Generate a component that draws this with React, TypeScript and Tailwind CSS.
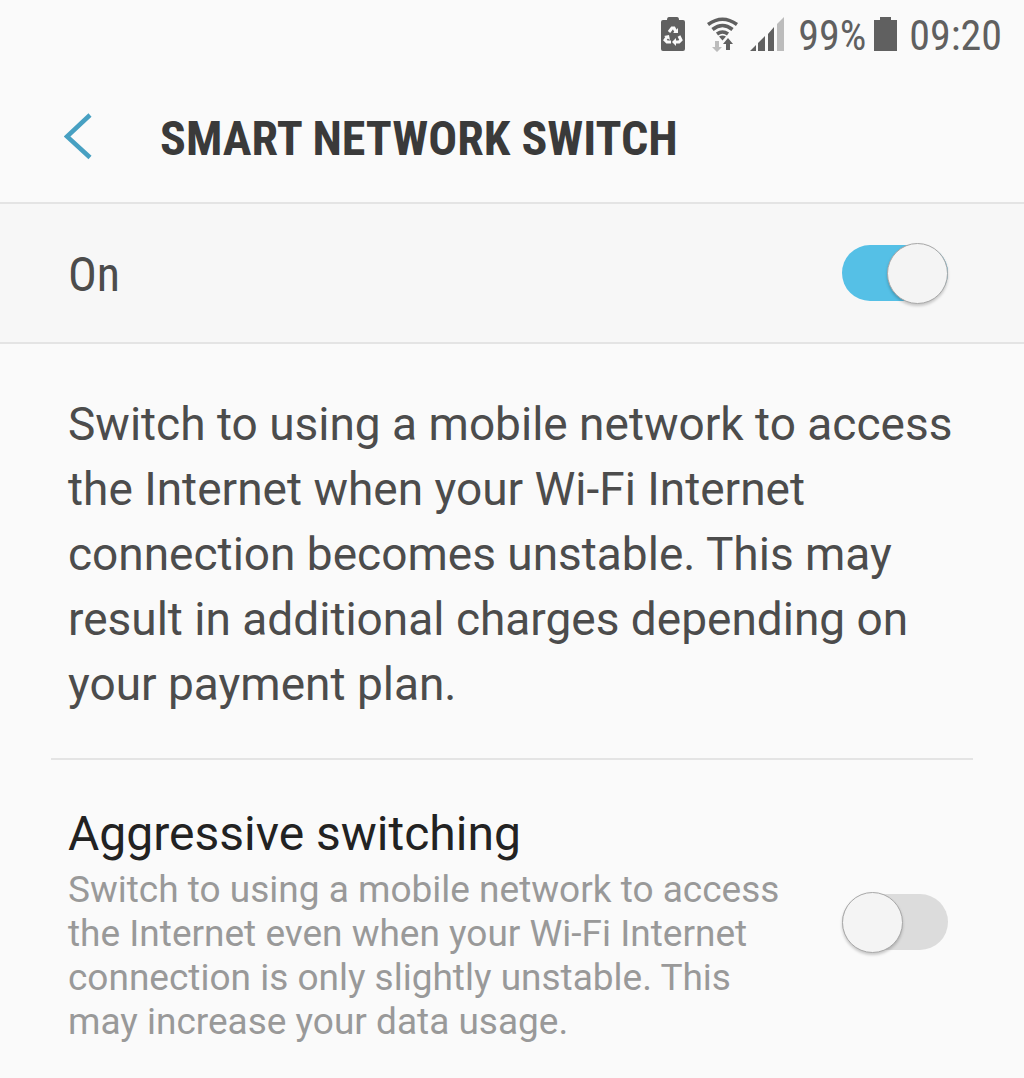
import { useState } from 'react';

type ToggleProps = {
  id: string;
  checked: boolean;
  onChange: (value: boolean) => void;
};

const Toggle = ({ id, checked, onChange }: ToggleProps) => (
  <span className="relative flex h-[62px] w-[106px] shrink-0 items-center">
    <input
      id={id}
      type="checkbox"
      role="switch"
      checked={checked}
      onChange={(e) => onChange(e.target.checked)}
      className="peer h-14 w-full cursor-pointer appearance-none rounded-full bg-[#dcdcdc] checked:bg-[#55c0e6]"
    />
    <span className="pointer-events-none absolute left-0 size-[61px] rounded-full border border-[#a8a8a8] bg-[#f4f4f4] shadow-[0_2px_3px_rgba(0,0,0,0.2)] peer-checked:right-0 peer-checked:left-auto" />
  </span>
);

const StatusBar = () => (
  <div className="flex h-[70px] items-center justify-end pr-[22px] text-[#606060]">
    <svg className="mr-[22px] h-9 w-6" viewBox="0 0 24 36" aria-hidden="true">
      <path d="M8 0h8q2 0 2 3h4q2 0 2 2v27q0 2-2 2H2q-2 0-2-2V5q0-2 2-2h4q0-3 2-3z" fill="currentColor" />
      <g fill="none" stroke="#fafafa" strokeWidth="3">
        <path d="M8 15l3-4h2l2 4" />
        <path d="M18 19l2 4-2 2h-4" />
        <path d="M10 25H6l-2-2 2-3" />
      </g>
      <path d="M12 16h5v-5zM15 21v8l-4-4zM3 19l5-1 1 5z" fill="#fafafa" />
    </svg>
    <svg className="mr-3 h-9 w-[31px]" viewBox="0 0 31 36" fill="none" aria-hidden="true">
      <path d="M1 7.500Q15.500-3 30 7.500M5.500 12.500Q15.500 4.500 25.500 12.500M10 17q5.500-4 11 0" stroke="currentColor" strokeWidth="3.600" />
      <path d="M12 19.500q3.500-2 7 0l-3.500 4z" fill="currentColor" />
      <path d="M8 24h4v6h3l-5 5-5-5h3z" fill="#bcbcbc" />
      <path d="M19 33v-6h-3l5-6 5 6h-3v6z" fill="currentColor" />
    </svg>
    <svg className="mr-[14px] h-9 w-[34px]" viewBox="0 0 34 36" fill="currentColor" aria-hidden="true">
      <path d="M0 34l6-6v6zM8 34v-8l7-7v15zM18 34V17l6-7v24z" />
      <path d="M27 34V7l7-7v34z" fill="#bcbcbc" />
    </svg>
    <span className="pt-0.5 font-['Roboto_Condensed','Roboto',sans-serif] text-[42px] leading-none">99%</span>
    <svg className="mr-3 ml-2 h-9 w-[23px]" viewBox="0 0 23 36" fill="currentColor" aria-hidden="true">
      <path d="M6 0h11v3h6v31H0V3h6z" />
    </svg>
    <span className="pt-0.5 font-['Roboto_Condensed','Roboto',sans-serif] text-[42px] leading-none">09:20</span>
  </div>
);

export default function App() {
  const [enabled, setEnabled] = useState(true);
  const [aggressive, setAggressive] = useState(false);

  return (
    <main className="min-h-screen bg-[#fafafa] font-['Roboto',sans-serif] text-[#4c4c4c]">
      <StatusBar />
      <header className="flex h-[132px] items-center pl-16">
        <button type="button" aria-label="Back" className="cursor-pointer text-[#47a0c2]">
          <svg className="h-12 w-7" viewBox="0 0 28 48" fill="none" stroke="currentColor" strokeWidth="4.500">
            <path d="M26 3L3 24.500l23 21" />
          </svg>
        </button>
        <h1 className="ml-[68px] pt-1.5 font-['Roboto_Condensed','Roboto',sans-serif] text-[48px] leading-[56px] font-bold text-[#3a3a3a]">
          SMART NETWORK SWITCH
        </h1>
      </header>
      <section className="flex h-[142px] items-center justify-between border-y-2 border-[#e4e4e4] bg-[#f7f7f7] pr-[76px] pl-[68px]">
        <label htmlFor="network-switch" className="pt-1 font-['Roboto_Condensed','Roboto',sans-serif] text-[48px] leading-[56px]">
          On
        </label>
        <Toggle id="network-switch" checked={enabled} onChange={setEnabled} />
      </section>
      <p className="pt-12 pr-16 pb-[41px] pl-[68px] text-[46px] leading-[65px]">
        Switch to using a mobile network to access the Internet when your Wi-Fi Internet connection becomes unstable.
        This may result in additional charges depending on your payment plan.
      </p>
      <hr className="mx-[51px] border-t-2 border-[#e4e4e4]" />
      <section className="flex items-center justify-between pt-10 pr-[76px] pb-8 pl-[68px]">
        <div className="max-w-[720px]">
          <label htmlFor="aggressive-switching" className="block text-[48px] leading-[68px] text-[#222]">
            Aggressive switching
          </label>
          <p className="text-[37px] leading-[44px] text-[#999]">
            Switch to using a mobile network to access the Internet even when your Wi-Fi Internet connection is only
            slightly unstable. This may increase your data usage.
          </p>
        </div>
        <Toggle id="aggressive-switching" checked={aggressive} onChange={setAggressive} />
      </section>
    </main>
  );
}
